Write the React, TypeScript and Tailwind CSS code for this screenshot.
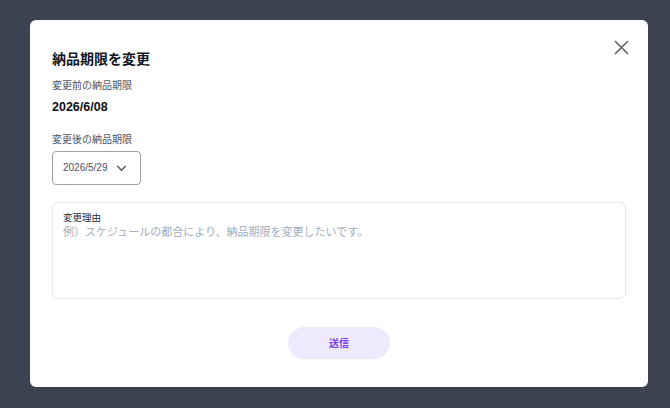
import React from 'react';

const font = { fontFamily: 'Inter, "Noto Sans CJK JP", sans-serif' };
const latin = { fontFamily: '"Liberation Sans", "Noto Sans CJK JP", sans-serif' };

const App: React.FC = () => {
  return (
    <div className="w-[670px] h-[408px] bg-[#3d4252] pt-[20px] pl-[30px] overflow-hidden" style={font}>
      <div className="relative w-[618px] h-[367px] bg-white rounded-[6px] px-[22px] pt-[30px]">
        {/* Close */}
        <button className="absolute top-[20px] right-[19px] text-[#5b606b]">
          <svg width="15" height="15" viewBox="0 0 15 15" fill="none" stroke="currentColor" strokeWidth="1.6" strokeLinecap="round">
            <path d="M1.5 1.5 L13.5 13.5 M13.5 1.5 L1.5 13.5" />
          </svg>
        </button>

        <h2 className="text-[14px] leading-[20px] font-bold text-[#111827] -mt-[1px]">納品期限を変更</h2>

        <p className="mt-[9px] text-[10px] leading-[14px] text-[#4a5568]">変更前の納品期限</p>
        <p className="mt-[7px] text-[12.5px] leading-[16px] font-bold text-[#111]" style={latin}>2026/6/08</p>

        <p className="mt-[17px] text-[10px] leading-[14px] text-[#4a5568]">変更後の納品期限</p>
        <div className="mt-[5px] w-[89px] h-[34px] border border-[#9ca3af] rounded-[4px] flex items-center justify-between pl-[10px] pr-[13px] text-[#4a5568]">
          <span className="text-[10px] leading-none" style={latin}>2026/5/29</span>
          <svg width="11" height="7" viewBox="0 0 12 8" fill="none" stroke="currentColor" strokeWidth="1.5" strokeLinecap="round" strokeLinejoin="round">
            <path d="M1.5 1.5 L6 6 L10.5 1.5" />
          </svg>
        </div>

        <div className="mt-[17px] w-[574px] h-[97px] border border-[#e5e7eb] rounded-[6px] px-[10px] pt-[8px]">
          <p className="text-[9.5px] leading-[14px] text-[#1f2937]">変更理由</p>
          <p className="-mt-[1px] text-[11px] leading-[16px] text-[#a0aec0]">例）スケジュールの都合により、納品期限を変更したいです。</p>
        </div>

        <div className="flex justify-center mt-[28px]">
          <button className="w-[102px] h-[32px] rounded-full bg-[#efe9fe] text-[#7c3aed] text-[10px] font-bold">送信</button>
        </div>
      </div>
    </div>
  );
};

export default App;
